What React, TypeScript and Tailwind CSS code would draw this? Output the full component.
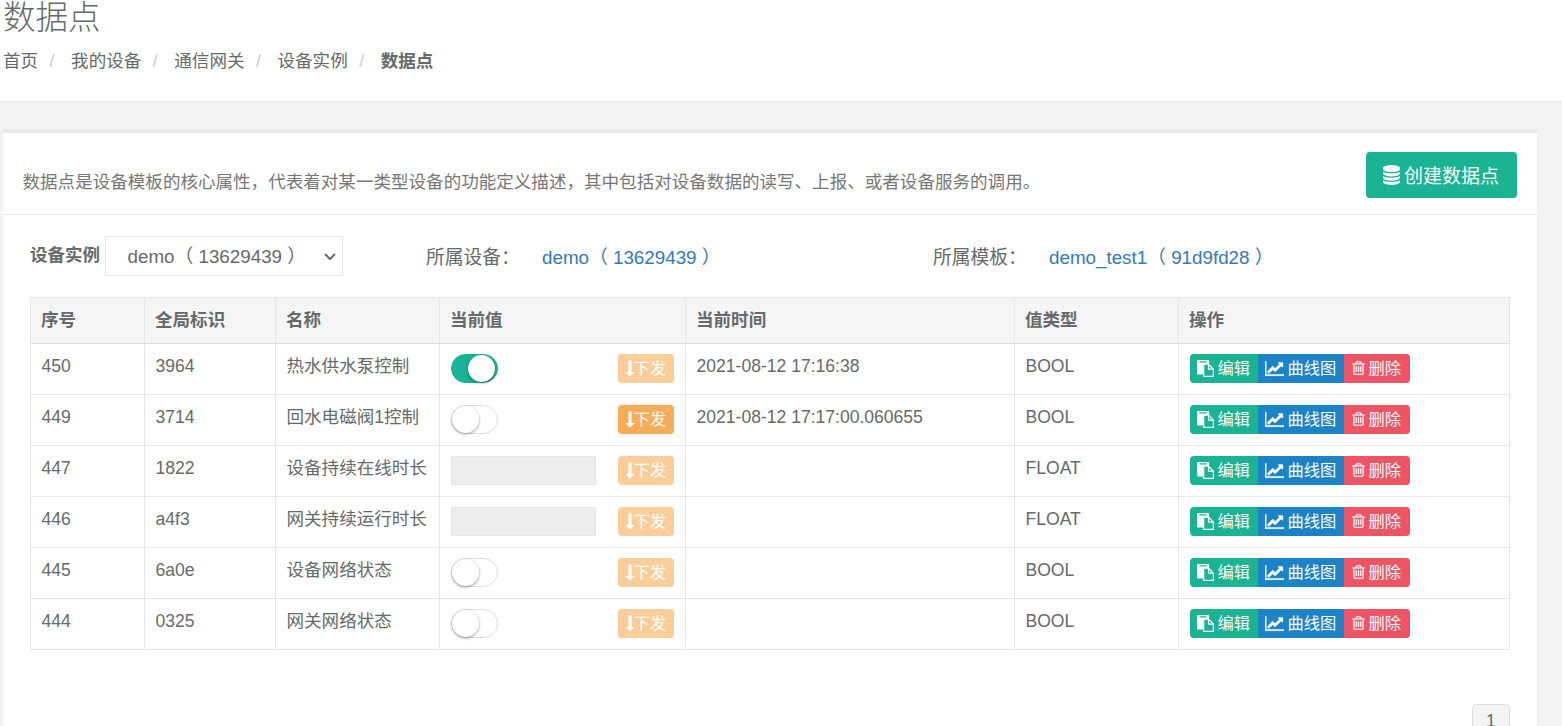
import { useState } from "react";
import clsx from "clsx";

interface DataPoint {
  id: number;
  key: string;
  name: string;
  type: "BOOL" | "FLOAT";
  value?: boolean;
  time: string;
  writable?: boolean;
}

const DATA_POINTS: DataPoint[] = [
  { id: 450, key: "3964", name: "热水供水泵控制", type: "BOOL", value: true, time: "2021-08-12 17:16:38" },
  { id: 449, key: "3714", name: "回水电磁阀1控制", type: "BOOL", value: false, time: "2021-08-12 17:17:00.060655", writable: true },
  { id: 447, key: "1822", name: "设备持续在线时长", type: "FLOAT", time: "" },
  { id: 446, key: "a4f3", name: "网关持续运行时长", type: "FLOAT", time: "" },
  { id: 445, key: "6a0e", name: "设备网络状态", type: "BOOL", value: false, time: "" },
  { id: 444, key: "0325", name: "网关网络状态", type: "BOOL", value: false, time: "" },
];

const COLUMNS = [
  { label: "序号", width: "w-[114px]" },
  { label: "全局标识", width: "w-[131px]" },
  { label: "名称", width: "w-[164px]" },
  { label: "当前值", width: "w-[246px]" },
  { label: "当前时间", width: "w-[329px]" },
  { label: "值类型", width: "w-[164px]" },
  { label: "操作", width: "w-[331px]" },
];

const BREADCRUMBS = ["首页", "我的设备", "通信网关", "设备实例"];

const ICONS = {
  database: {
    viewBox: "128 0 1536 1792",
    d: "M896 768q237 0 443-43t325-127v170q0 69-103 128t-280 93.5-385 34.5-385-34.5-280-93.5-103-128v-170q119 84 325 127t443 43zm0 768q237 0 443-43t325-127v170q0 69-103 128t-280 93.5-385 34.5-385-34.5-280-93.5-103-128v-170q119 84 325 127t443 43zm0-384q237 0 443-43t325-127v170q0 69-103 128t-280 93.5-385 34.5-385-34.5-280-93.5-103-128v-170q119 84 325 127t443 43zm0-1152q208 0 385 34.5t280 93.5 103 128v128q0 69-103 128t-280 93.5-385 34.5-385-34.5-280-93.5-103-128v-128q0-69 103-128t280-93.5 385-34.5z",
  },
  paste: {
    viewBox: "0 0 1792 1792",
    d: "M768 1664h896v-640h-416q-40 0-68-28t-28-68v-416h-384v1152zm256-1440v-64q0-13-9.5-22.5t-22.5-9.5h-704q-13 0-22.5 9.5t-9.5 22.5v64q0 13 9.5 22.5t22.5 9.5h704q13 0 22.5-9.5t9.5-22.5zm256 672h299l-299-299v299zm512 128v672q0 40-28 68t-68 28h-960q-40 0-68-28t-28-68v-160h-544q-40 0-68-28t-28-68v-1344q0-40 28-68t68-28h1088q40 0 68 28t28 68v328q21 13 36 28l408 408q28 28 48 76t20 88z",
  },
  chart: {
    viewBox: "0 0 2048 1792",
    d: "M2048 1536v128h-2048v-1536h128v1408h1920zm-128-1248v435q0 21-19.5 29.5t-35.5-7.5l-121-121-633 633q-10 10-23 10t-23-10l-233-233-416 416-192-192 585-585q10-10 23-10t23 10l233 233 464-464-121-121q-16-16-7.5-35.5t29.5-19.5h435q14 0 23 9t9 23z",
  },
  trash: {
    viewBox: "192 0 1408 1792",
    d: "M704 736v576q0 14-9 23t-23 9h-64q-14 0-23-9t-9-23v-576q0-14 9-23t23-9h64q14 0 23 9t9 23zm256 0v576q0 14-9 23t-23 9h-64q-14 0-23-9t-9-23v-576q0-14 9-23t23-9h64q14 0 23 9t9 23zm256 0v576q0 14-9 23t-23 9h-64q-14 0-23-9t-9-23v-576q0-14 9-23t23-9h64q14 0 23 9t9 23zm128 724v-948h-896v948q0 22 7 40.5t14.5 27 10.5 8.5h832q3 0 10.5-8.5t14.5-27 7-40.5zm-672-1076h448l-48-117q-7-9-17-11h-317q-10 2-17 11zm928 32v64q0 14-9 23t-23 9h-96v948q0 83-47 143.5t-113 60.5h-832q-66 0-113-58.5t-47-141.5v-952h-96q-14 0-23-9t-9-23v-64q0-14 9-23t23-9h309l70-167q15-37 54-63t79-26h320q40 0 79 26t54 63l70 167h309q14 0 23 9t9 23z",
  },
  arrowDown: {
    viewBox: "0 0 8 17",
    d: "M2.5 0.5h3v11.5h2.2q0.5 0.2 0.2 0.7l-3.5 3.5q-0.4 0.3-0.8 0l-3.5-3.5q-0.3-0.5 0.2-0.7h2.2z",
  },
};

function Icon({ name, className }: { name: keyof typeof ICONS; className: string }) {
  return (
    <svg viewBox={ICONS[name].viewBox} className={clsx("shrink-0 fill-current", className)} aria-hidden="true">
      <path d={ICONS[name].d} />
    </svg>
  );
}

function Switch({ initial }: { initial: boolean }) {
  const [on, setOn] = useState(initial);
  return (
    <button
      type="button"
      role="switch"
      aria-checked={on}
      onClick={() => setOn(!on)}
      className={clsx(
        "flex h-[29px] w-[47px] items-center rounded-full border",
        on ? "justify-end border-[#1ab394] bg-[#1ab394] pr-[2px]" : "justify-start border-[#dfdfdf] bg-white"
      )}
    >
      <span className="size-[27px] rounded-full bg-white shadow-[0_1px_3px_rgba(0,0,0,0.4)]" />
    </button>
  );
}

function ValueCell({ point }: { point: DataPoint }) {
  return (
    <div className="flex items-start justify-between pr-px">
      {point.type === "BOOL" ? (
        <Switch initial={!!point.value} />
      ) : (
        <input disabled className="h-[29px] w-[145px] rounded-[1px] border border-[#e5e6e7] bg-[#eee]" />
      )}
      <button
        type="button"
        disabled={!point.writable}
        className="flex h-[29px] w-14 items-center rounded-[4px] bg-[#f8ac59] pl-2 text-[16.25px] text-white disabled:opacity-60"
      >
        <Icon name="arrowDown" className="h-[17px] w-2" />
        下发
      </button>
    </div>
  );
}

function RowActions() {
  return (
    <div className="flex h-[29px] text-[16.25px] text-white">
      <button type="button" className="flex w-[68px] items-center gap-1 rounded-l-[4px] bg-[#1ab394] pl-[7px]">
        <Icon name="paste" className="size-[17px]" />
        编辑
      </button>
      <button type="button" className="flex w-[86px] items-center gap-1 bg-[#1c84c6] pl-[7px]">
        <Icon name="chart" className="h-[17px] w-[19px] stroke-current stroke-[50]" />
        曲线图
      </button>
      <button type="button" className="flex w-[66px] items-center gap-1 rounded-r-[4px] bg-[#ed5565] pl-2">
        <Icon name="trash" className="h-4 w-[13px] stroke-current stroke-[20]" />
        删除
      </button>
    </div>
  );
}

export default function App() {
  return (
    <div className="h-[726px] overflow-hidden bg-[#f3f3f4] font-['Liberation_Sans','Noto_Sans_CJK_SC',sans-serif] text-[17.56px] leading-[25px] text-[#676a6c]">
      <header className="h-[102px] border-b border-[#e7eaec] bg-white pl-[3px]">
        <h1 className="text-[32.5px] leading-[36px] font-light">数据点</h1>
        <ol className="mt-[13px] flex">
          {BREADCRUMBS.map((item) => (
            <li key={item} className="flex">
              <a href="#">{item}</a>
              <span className="w-[33px] pl-[11.5px] text-[#ccc]">/</span>
            </li>
          ))}
          <li className="font-bold">数据点</li>
        </ol>
      </header>

      <main className="mt-[27px] mr-[25px] ml-[3px] h-[640px] border-t-4 border-[#e7eaec] bg-white">
        <div className="flex h-[82px] items-start justify-between border-b border-[#e7eaec] pr-5 pl-[19.5px]">
          <p className="mt-[37px] text-[#777]">
            数据点是设备模板的核心属性，代表着对某一类型设备的功能定义描述，其中包括对设备数据的读写、上报、或者设备服务的调用。
          </p>
          <button
            type="button"
            className="mt-[19px] flex h-[46px] w-[151px] items-center gap-1 rounded-[4px] bg-[#1ab394] pl-[17px] text-[19px] text-white"
          >
            <Icon name="database" className="h-5 w-[17px]" />
            <span className="pt-0.5">创建数据点</span>
          </button>
        </div>

        <div className="px-[27px] pt-[21px]">
          <div className="flex h-10 items-center text-[18.8px]">
            <label htmlFor="instance" className="w-[75px] pb-0.5 text-[17.5px] font-bold">
              设备实例
            </label>
            <div className="relative w-[238px]">
              <select id="instance" className="h-10 w-full appearance-none border border-[#e5e6e7] bg-white pl-[21.5px]">
                <option>demo（ 13629439 ）</option>
              </select>
              <svg viewBox="0 0 12 8" className="pointer-events-none absolute top-[17px] right-[7px] h-2 w-3 fill-none stroke-current stroke-2">
                <path d="M1 1l5 5 5-5" />
              </svg>
            </div>
            <div className="ml-[83px] flex w-[507px] pt-0.5">
              <span className="w-[116px]">所属设备：</span>
              <a href="#" className="text-[#337ab7]">demo（ 13629439 ）</a>
            </div>
            <div className="flex pt-0.5">
              <span className="w-[116px]">所属模板：</span>
              <a href="#" className="text-[#337ab7]">demo_test1（ 91d9fd28 ）</a>
            </div>
          </div>

          <table className="mt-[21px] w-[1479px] table-fixed border-collapse text-left">
            <thead>
              <tr className="h-[46px] bg-[#f5f5f6]">
                {COLUMNS.map((col) => (
                  <th key={col.label} className={clsx("border border-b-[#ddd] border-[#e7e7e7] px-2.5 font-bold", col.width)}>
                    {col.label}
                  </th>
                ))}
              </tr>
            </thead>
            <tbody>
              {DATA_POINTS.map((point) => (
                <tr key={point.id} className="h-[51px] align-top [&>td]:border [&>td]:border-[#e7e7e7] [&>td]:px-[10.5px] [&>td]:pt-[9.5px]">
                  <td>{point.id}</td>
                  <td>{point.key}</td>
                  <td>{point.name}</td>
                  <td><ValueCell point={point} /></td>
                  <td>{point.time}</td>
                  <td>{point.type}</td>
                  <td><RowActions /></td>
                </tr>
              ))}
            </tbody>
          </table>

          <div className="mt-[54px] flex justify-end">
            <button type="button" className="h-[38px] w-[38px] rounded-[4px] border border-[#ddd] bg-[#f4f4f4] pb-1">
              1
            </button>
          </div>
        </div>
      </main>
    </div>
  );
}
